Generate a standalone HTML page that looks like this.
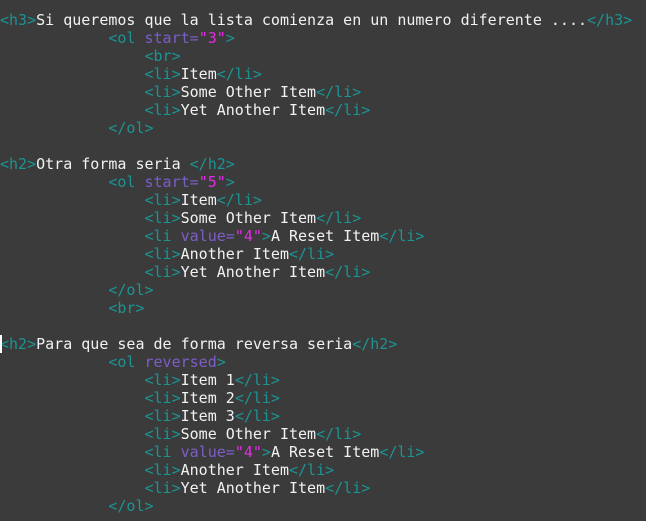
<!DOCTYPE html>
<html><head><style>
html,body{margin:0;padding:0;background:#3b3b3b;width:646px;height:521px;overflow:hidden}
pre{margin:0;padding:11px 0 0 0;font-family:"DejaVu Sans Mono","Liberation Mono",monospace;font-size:15px;line-height:18px;color:#f2f2f2;white-space:pre;position:relative}
.t{color:#1c9494}.a{color:#7d5dc8}.s{color:#e22ee2}
.cur{position:absolute;left:0;top:335px;width:2px;height:18px;background:#fff}
</style></head><body><pre><span class="cur"></span><span class="t">&lt;h3&gt;</span>Si queremos que la lista comienza en un numero diferente ....<span class="t">&lt;/h3&gt;</span>
            <span class="t">&lt;ol</span> <span class="a">start=</span><span class="s">"3"</span><span class="t">&gt;</span>
                <span class="t">&lt;br&gt;</span>
                <span class="t">&lt;li&gt;</span>Item<span class="t">&lt;/li&gt;</span>
                <span class="t">&lt;li&gt;</span>Some Other Item<span class="t">&lt;/li&gt;</span>
                <span class="t">&lt;li&gt;</span>Yet Another Item<span class="t">&lt;/li&gt;</span>
            <span class="t">&lt;/ol&gt;</span>

<span class="t">&lt;h2&gt;</span>Otra forma seria <span class="t">&lt;/h2&gt;</span>
            <span class="t">&lt;ol</span> <span class="a">start=</span><span class="s">"5"</span><span class="t">&gt;</span>
                <span class="t">&lt;li&gt;</span>Item<span class="t">&lt;/li&gt;</span>
                <span class="t">&lt;li&gt;</span>Some Other Item<span class="t">&lt;/li&gt;</span>
                <span class="t">&lt;li</span> <span class="a">value=</span><span class="s">"4"</span><span class="t">&gt;</span>A Reset Item<span class="t">&lt;/li&gt;</span>
                <span class="t">&lt;li&gt;</span>Another Item<span class="t">&lt;/li&gt;</span>
                <span class="t">&lt;li&gt;</span>Yet Another Item<span class="t">&lt;/li&gt;</span>
            <span class="t">&lt;/ol&gt;</span>
            <span class="t">&lt;br&gt;</span>

<span class="t">&lt;h2&gt;</span>Para que sea de forma reversa seria<span class="t">&lt;/h2&gt;</span>
            <span class="t">&lt;ol</span> <span class="a">reversed</span><span class="t">&gt;</span>
                <span class="t">&lt;li&gt;</span>Item 1<span class="t">&lt;/li&gt;</span>
                <span class="t">&lt;li&gt;</span>Item 2<span class="t">&lt;/li&gt;</span>
                <span class="t">&lt;li&gt;</span>Item 3<span class="t">&lt;/li&gt;</span>
                <span class="t">&lt;li&gt;</span>Some Other Item<span class="t">&lt;/li&gt;</span>
                <span class="t">&lt;li</span> <span class="a">value=</span><span class="s">"4"</span><span class="t">&gt;</span>A Reset Item<span class="t">&lt;/li&gt;</span>
                <span class="t">&lt;li&gt;</span>Another Item<span class="t">&lt;/li&gt;</span>
                <span class="t">&lt;li&gt;</span>Yet Another Item<span class="t">&lt;/li&gt;</span>
            <span class="t">&lt;/ol&gt;</span>
</pre></body></html>
